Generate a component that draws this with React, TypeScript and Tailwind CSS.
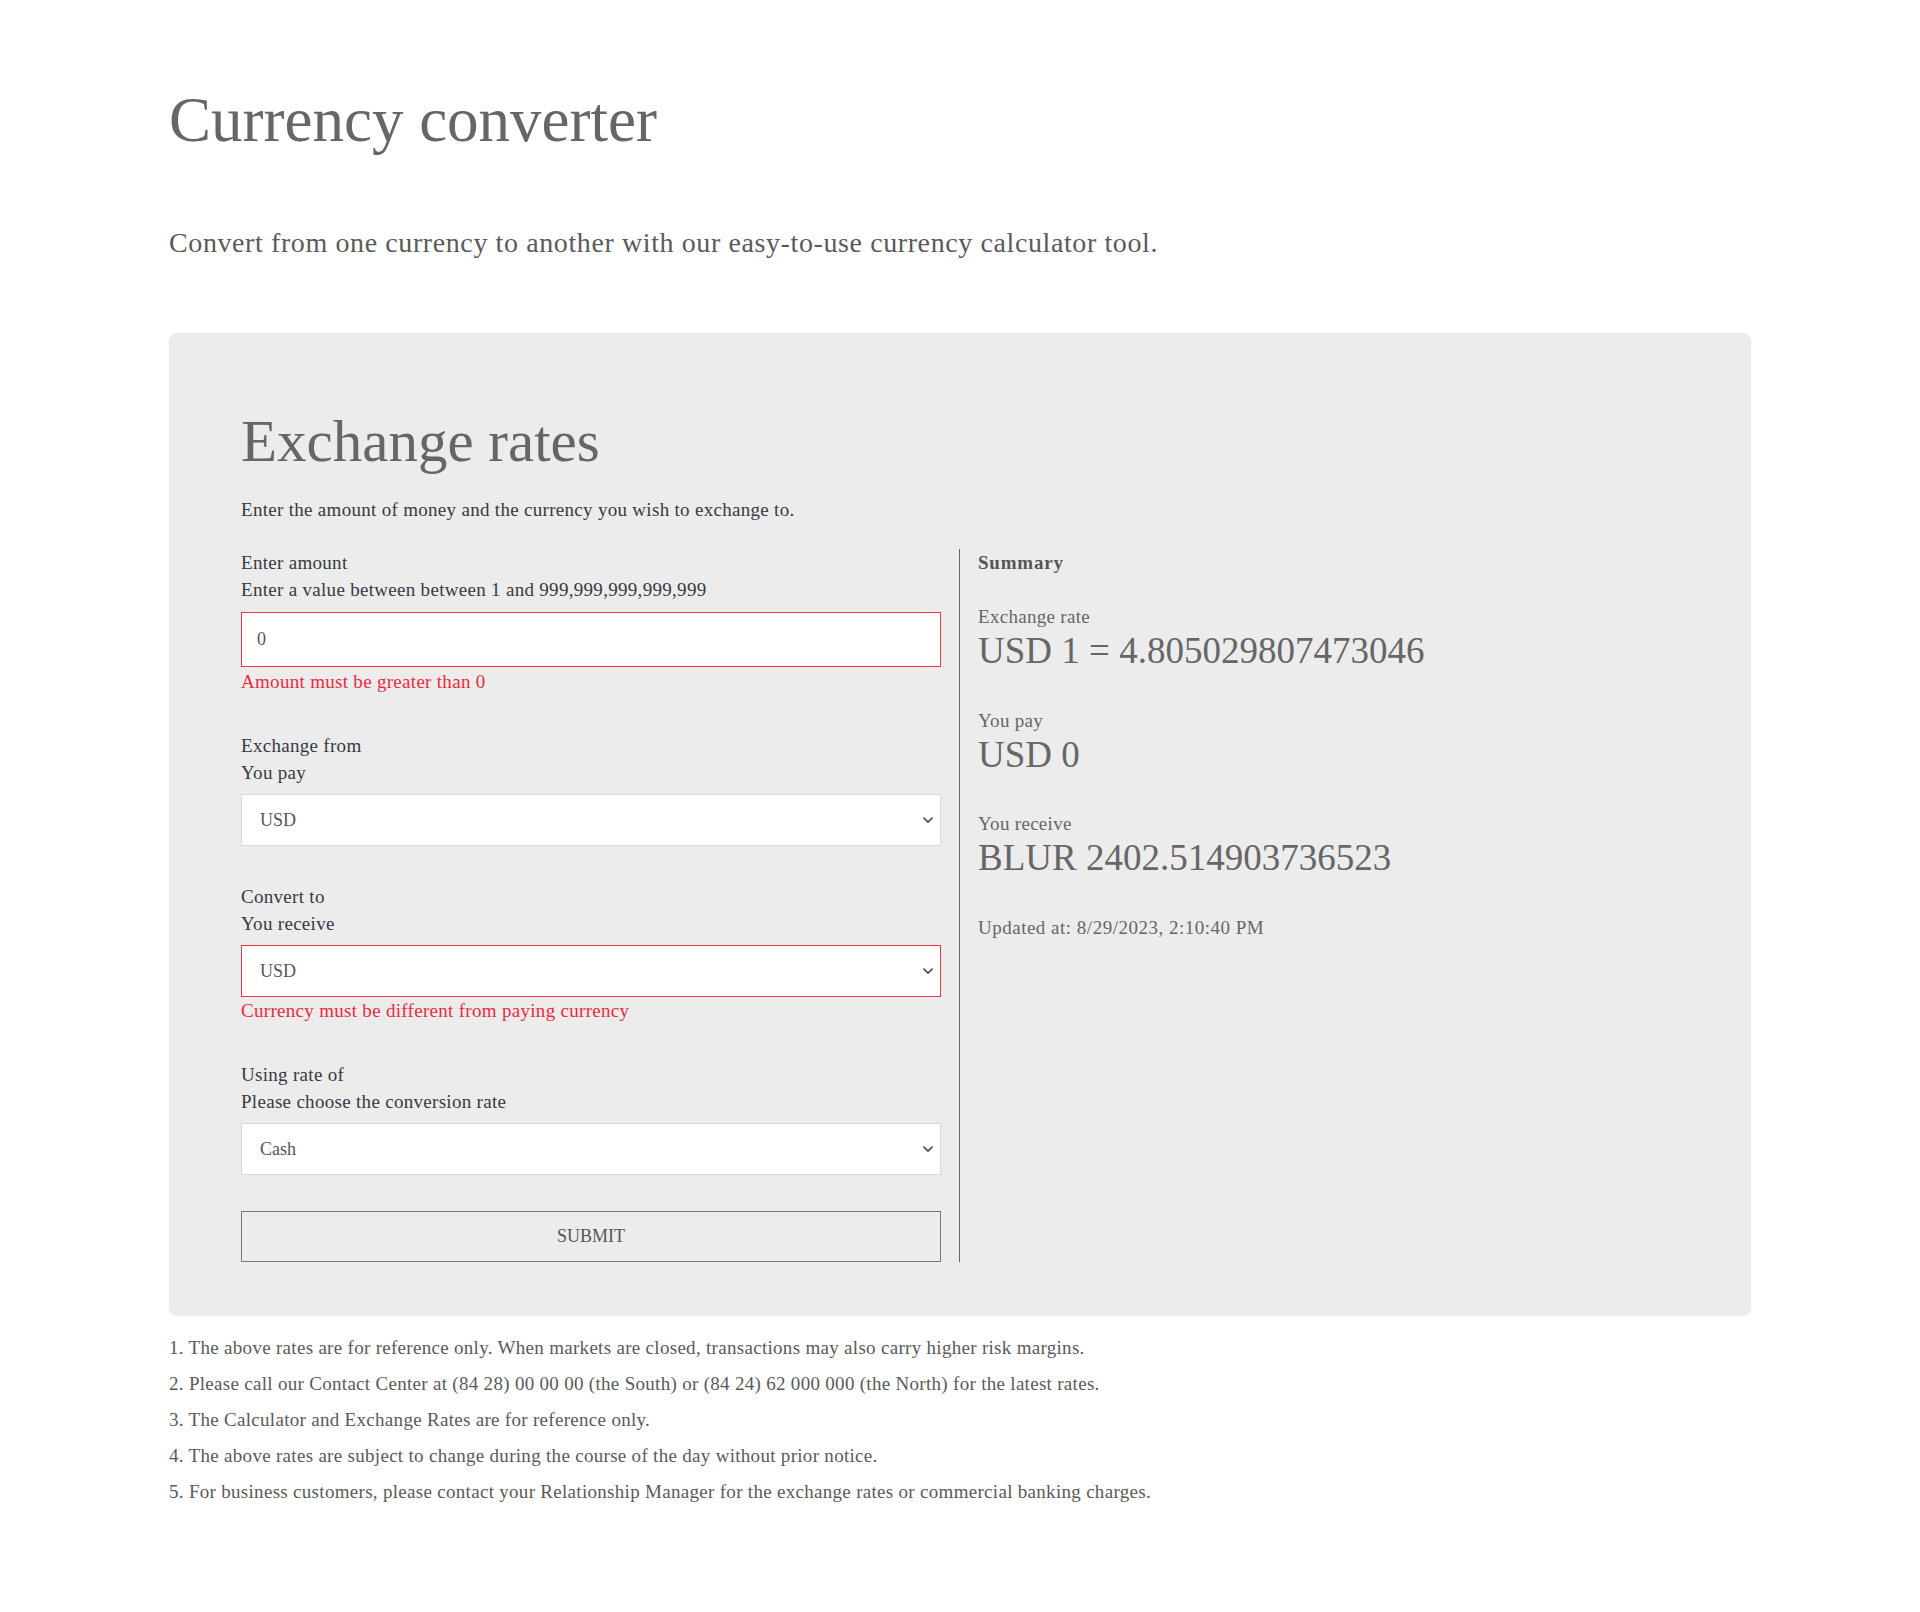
const notes = [
  '1. The above rates are for reference only. When markets are closed, transactions may also carry higher risk margins.',
  '2. Please call our Contact Center at (84 28) 00 00 00 (the South) or (84 24) 62 000 000 (the North) for the latest rates.',
  '3. The Calculator and Exchange Rates are for reference only.',
  '4. The above rates are subject to change during the course of the day without prior notice.',
  '5. For business customers, please contact your Relationship Manager for the exchange rates or commercial banking charges.',
];

function FieldLabel({ title, hint }: { title: string; hint: string }) {
  return (
    <div className="text-[19px] leading-[27px] tracking-[0.3px] text-[#353a44]">
      <div>{title}</div>
      <div>{hint}</div>
    </div>
  );
}

function Chevron() {
  return (
    <svg
      className="pointer-events-none absolute right-[8px] top-[23px]"
      width="10"
      height="7"
      viewBox="0 0 10 7"
      fill="none"
    >
      <path d="M1 1.2 5 5.2 9 1.2" stroke="#555" strokeWidth="1.8" strokeLinecap="round" strokeLinejoin="round" />
    </svg>
  );
}

function Select({ value, invalid }: { value: string; invalid?: boolean }) {
  return (
    <div className="relative mt-[8px]">
      <select
        defaultValue={value}
        className={`block h-[52px] w-full appearance-none bg-white pl-[18px] text-[18px] text-[#555] outline-none border ${
          invalid ? 'border-[#f23645]' : 'border-[#d6d9de]'
        }`}
      >
        <option>{value}</option>
      </select>
      <Chevron />
    </div>
  );
}

function SummaryItem({ label, value, gap }: { label: string; value: string; gap: string }) {
  return (
    <div className={gap}>
      <div className="text-[19px] leading-[27px] tracking-[0.3px]">{label}</div>
      <div className="pt-[2px] text-[37px] leading-[38px]">{value}</div>
    </div>
  );
}

export default function App() {
  return (
    <div className="min-h-[1612px] bg-white font-['Liberation_Serif',serif]">
      <div className="mx-auto w-[1582px] pt-[83px]">
        <h1 className="text-[63px] leading-[74px] text-[#666]">Currency converter</h1>
        <p className="mt-[68px] text-[28px] leading-[36px] tracking-[0.6px] text-[#5a5a5a]">
          Convert from one currency to another with our easy-to-use currency calculator tool.
        </p>

        <div className="mt-[72px] rounded-[8px] bg-[#ececec] pb-[54px] pl-[72px] pr-[72px] pt-[73px]">
          <h2 className="text-[59px] leading-[70px] text-[#666]">Exchange rates</h2>
          <p className="mt-[20px] text-[19px] leading-[27px] tracking-[0.3px] text-[#353a44]">
            Enter the amount of money and the currency you wish to exchange to.
          </p>

          <div className="mt-[26px] flex items-stretch">
            <div className="mr-[18px] w-[700px]">
              <FieldLabel title="Enter amount" hint="Enter a value between between 1 and 999,999,999,999,999" />
              <input
                defaultValue="0"
                className="mt-[9px] block h-[55px] w-full border border-[#f23645] bg-white pl-[15px] text-[18px] text-[#555] outline-none"
              />
              <div className="mt-[1px] text-[19px] leading-[27px] tracking-[0.3px] text-[#ee2a3c]">
                Amount must be greater than 0
              </div>

              <div className="mt-[37px]">
                <FieldLabel title="Exchange from" hint="You pay" />
                <Select value="USD" />
              </div>

              <div className="mt-[37px]">
                <FieldLabel title="Convert to" hint="You receive" />
                <Select value="USD" invalid />
                <div className="text-[19px] leading-[27px] tracking-[0.3px] text-[#ee2a3c]">
                  Currency must be different from paying currency
                </div>
              </div>

              <div className="mt-[37px]">
                <FieldLabel title="Using rate of" hint="Please choose the conversion rate" />
                <Select value="Cash" />
              </div>

              <button
                type="button"
                className="mt-[36px] block h-[51px] w-full border border-[#777] text-[18px] text-[#555]"
              >
                SUBMIT
              </button>
            </div>

            <div className="flex-1 border-l border-[#666] pl-[18px] text-[#666]">
              <div className="text-[19px] font-bold leading-[27px] tracking-[0.8px] text-[#555]">Summary</div>
              <SummaryItem gap="mt-[27px]" label="Exchange rate" value="USD 1 = 4.805029807473046" />
              <SummaryItem gap="mt-[37px]" label="You pay" value="USD 0" />
              <SummaryItem gap="mt-[36px]" label="You receive" value="BLUR 2402.514903736523" />
              <div className="mt-[37px] text-[19px] leading-[27px] tracking-[0.5px]">
                Updated at: 8/29/2023, 2:10:40 PM
              </div>
            </div>
          </div>
        </div>

        <ul className="mt-[14px] text-[19px] leading-[36px] tracking-[0.3px] text-[#5a5a5a]">
          {notes.map((n) => (
            <li key={n}>{n}</li>
          ))}
        </ul>
      </div>
    </div>
  );
}
